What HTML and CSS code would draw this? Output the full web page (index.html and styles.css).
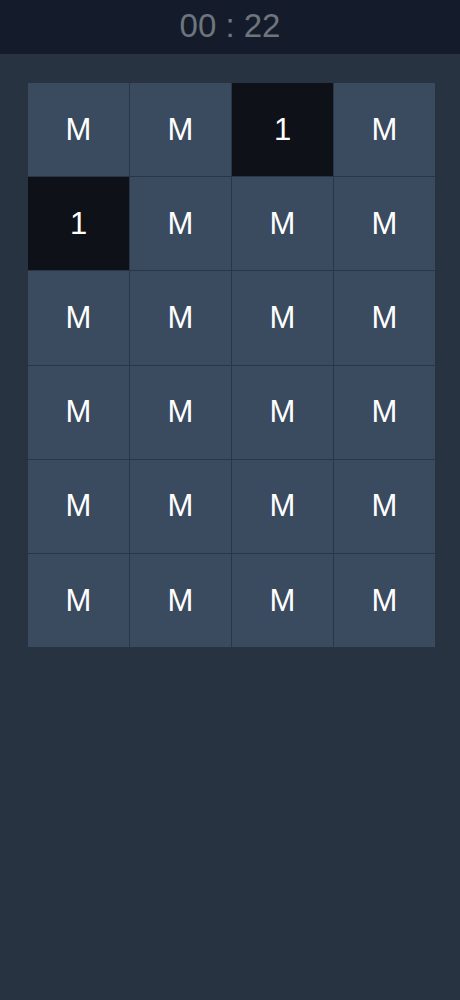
FILE: index.html
```html
<!DOCTYPE html>
<html lang="en">
<head>
    <meta charset="UTF-8">
    <meta name="viewport" content="width=device-width, initial-scale=1.0">
    <title>Memory</title>
    <link rel="stylesheet" href="styles.css">
</head>
<body>
    <div class="topbar">
        <span class="timer">00 : 22</span>
    </div>

    <div class="board">
        <div class="cell">M</div>
        <div class="cell">M</div>
        <div class="cell open">1</div>
        <div class="cell">M</div>

        <div class="cell open">1</div>
        <div class="cell">M</div>
        <div class="cell">M</div>
        <div class="cell">M</div>

        <div class="cell">M</div>
        <div class="cell">M</div>
        <div class="cell">M</div>
        <div class="cell">M</div>

        <div class="cell">M</div>
        <div class="cell">M</div>
        <div class="cell">M</div>
        <div class="cell">M</div>

        <div class="cell">M</div>
        <div class="cell">M</div>
        <div class="cell">M</div>
        <div class="cell">M</div>

        <div class="cell">M</div>
        <div class="cell">M</div>
        <div class="cell">M</div>
        <div class="cell">M</div>
    </div>
</body>
</html>
```

FILE: styles.css
```css
/* Estilos gerais */
body {
    margin: 0;
    font-family: "Liberation Sans", Arial, sans-serif;
    background-color: #283342;
    min-height: 1000px;
}

.topbar {
    height: 54px;
    background-color: #141c2b;
    display: flex;
    justify-content: center;
    align-items: center;
}
.timer {
    color: #6f757d;
    font-size: 33px;
    margin-top: -2px;
}

/* Tabuleiro */
.board {
    margin: 29px 25px 0 28px;
    display: grid;
    grid-template-columns: repeat(4, 101px);
    grid-auto-rows: 93.2px;
    gap: 1px;
    background-color: #2a3545;
    width: 407px;
}
.cell {
    background-color: #3a4a5f;
    color: #fff;
    font-size: 31px;
    display: flex;
    justify-content: center;
    align-items: center;
}
.cell.open {
    background-color: #0f1118;
}
```
